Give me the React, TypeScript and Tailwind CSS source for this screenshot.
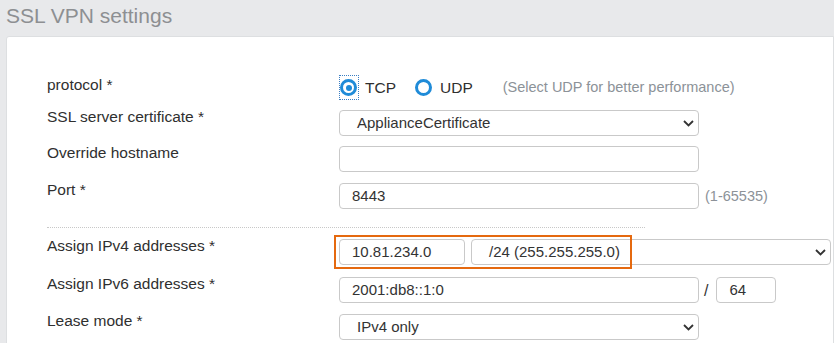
import React from "react";

const Chevron = () => (
  <svg width="11" height="7" viewBox="0 0 11 7" className="shrink-0">
    <polyline points="1,1 5.5,5.5 10,1" fill="none" stroke="#333" strokeWidth="1.8" />
  </svg>
);

const Label = ({ children }: { children: React.ReactNode }) => (
  <div className="w-[292px] shrink-0 -mt-[2px] leading-[18px] text-[15.5px] text-[#2f2f2f]">{children}</div>
);

const Field = ({ value = "", w = "w-[360px]" }: { value?: string; w?: string }) => (
  <div className={`${w} h-[26px] border border-[#c9c9c9] rounded-[4px] bg-white pl-[12px] flex items-center text-[15px] text-[#333]`}>
    {value}
  </div>
);

const Select = ({ value, w = "w-[360px]" }: { value: string; w?: string }) => (
  <div className={`${w} h-[26px] border border-[#c9c9c9] rounded-[4px] bg-white pl-[17px] pr-[4px] flex items-center justify-between text-[15px] text-[#333]`}>
    <span>{value}</span>
    <Chevron />
  </div>
);

const Radio = ({ checked }: { checked?: boolean }) => (
  <span className="w-[17px] h-[17px] rounded-full border-[3px] border-[#1f8bd8] bg-white flex items-center justify-center">
    {checked && <span className="w-[6px] h-[6px] rounded-full bg-[#1f8bd8]" />}
  </span>
);

export default function App() {
  return (
    <div className="w-[834px] h-[343px] overflow-hidden bg-[#e8e9eb] font-['Liberation_Sans',Arial,sans-serif]">
      <h1 className="h-[36px] pl-[6px] text-[21px] leading-[31px] text-[#8d8f92]">SSL VPN settings</h1>
      <div className="ml-[6px] h-[320px] bg-white border border-[#dddfe1] rounded-tl-[3px] pl-[40px] pt-[38px]">
        {/* protocol */}
        <div className="flex items-start h-[25px]">
          <div className="w-[292px] shrink-0 mt-[1px] leading-[18px] text-[15.5px] text-[#2f2f2f]">protocol *</div>
          <div className="flex items-center h-[25px] text-[15.5px] text-[#2f2f2f]">
            <span className="w-[20px] h-[25px] border border-dotted border-[#3b7fc4] flex items-center">
              <Radio checked />
            </span>
            <span className="ml-[6px]">TCP</span>
            <span className="ml-[19px]"><Radio /></span>
            <span className="ml-[8px]">UDP</span>
            <span className="ml-[30px] text-[14.5px] text-[#8c9298]">(Select UDP for better performance)</span>
          </div>
        </div>

        <div className="flex items-start mt-[10px]">
          <Label>SSL server certificate *</Label>
          <Select value="ApplianceCertificate" />
        </div>

        <div className="flex items-start mt-[10px]">
          <Label>Override hostname</Label>
          <Field />
        </div>

        <div className="flex items-start mt-[11px]">
          <Label>Port *</Label>
          <Field value="8443" />
          <span className="ml-[6px] mt-[3px] text-[14.5px] text-[#8c9298]">(1-65535)</span>
        </div>

        <div className="w-[598px] mt-[18px] border-t border-dotted border-[#c8c8c8]" />

        <div className="flex items-start mt-[11px]">
          <Label>Assign IPv4 addresses *</Label>
          <div className="relative flex gap-[6px]">
            <Field value="10.81.234.0" w="w-[126px]" />
            <Select value="/24 (255.255.255.0)" w="w-[360px]" />
            <div className="absolute -left-[5px] -top-[4px] w-[298px] h-[34px] border-2 border-[#e5690f]" />
          </div>
        </div>

        <div className="flex items-start mt-[12px]">
          <Label>Assign IPv6 addresses *</Label>
          <Field value="2001:db8::1:0" />
          <span className="ml-[5px] mt-[2px] text-[16px] text-[#333]">/</span>
          <div className="ml-[8px]">
            <Field value="64" w="w-[60px]" />
          </div>
        </div>

        <div className="flex items-start mt-[11px]">
          <Label>Lease mode *</Label>
          <Select value="IPv4 only" />
        </div>
      </div>
    </div>
  );
}
